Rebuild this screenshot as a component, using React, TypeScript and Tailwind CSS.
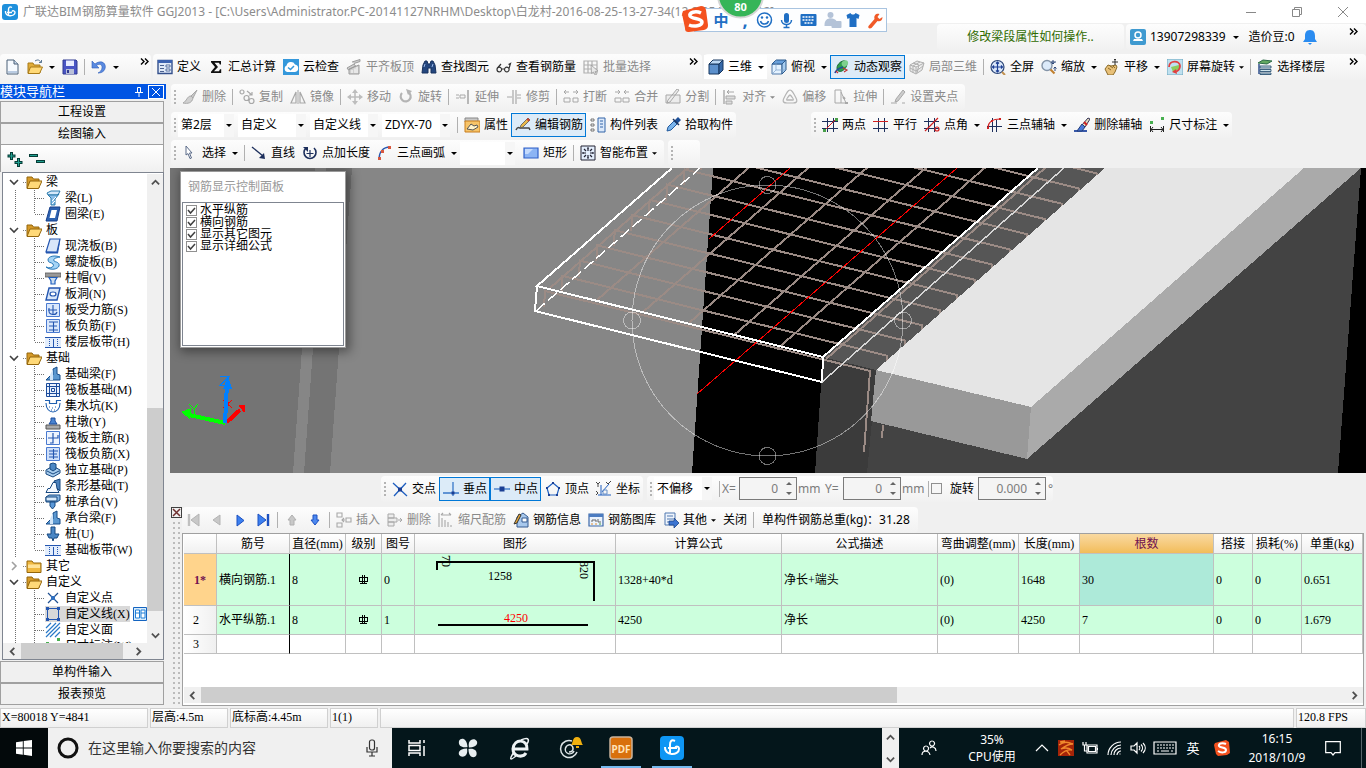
import React from "react";

type Shape = [d: string, fill: string, stroke?: string, width?: number];

const G = "#a8a8a8";
const N = "#1d2f5c";
const B = "#1f5fc0";
const R = "#d02020";

const ICONS: Record<string, Shape[]> = {
  fresh: [["M3 1h7l4 4v10H3z", "#f6faff", "#4a6078"], ["M10 1v4h4", "#c8d8ea", "#4a6078"], ["M4 12h9v2H4z", "#b9cbe2"]],
  open: [["M1 4h5l1 2h6v8H1z", "#e0ac38", "#a87a18"], ["M3.500 8h12l-3 6.500H1z", "#ffd977", "#a87a18"], ["M8 2c3-2 5-1 6 2m-2-.5h2.500V1", "none", "#5b7894"]],
  save: [["M1 1h13l1 1v13H1z", "#4a55c4", "#303a90"], ["M4 1.500h8V7H4z", "#e8ecff"], ["M4 10h8v5H4z", "#b9c0d8"], ["M5 11h2v3H5z", "#303a90"]],
  undo: [["M1 2v7h7L5.500 6.500C9 4 11.500 6 11 9c-.3 2.500-2 4-4 5 4 0 7-2 7.300-6C14.500 3 9 1 4 5z", "#5a8ae0", "#2b5cb8", 0.6]],
  define: [["M1 1.500h14v13H1z", "#dfe9f8", "#34508c", 1.4], ["M1 1h14v3H1z", "#3c62b0"], ["M3 6.500h4m-4 3h4m-4 3h4", "none", "#4b6290"], ["M9 6h4v2H9zM9 10h4v2H9z", "#fff", "#34508c", 0.8]],
  sigma: [["M3 2h10v3.500h-1.200L11 3.800H6.500L10 8l-4 4.300h5l1-2h1.200V14H3v-1.300L7 8 3 3.200z", "#111"]],
  cloud: [["M0 0h16v16H0z", "#3498db"], ["M4 13a3.500 3.500 0 0 1-.4-6.500A4.500 4.500 0 0 1 12 5.500 3.800 3.800 0 0 1 12 13z", "#fff"], ["M5 8.500l2.500 2L11 7", "none", "#3498db", 1.5]],
  flat: [["M1 9l7-4 1.500 2-7 4zM6 3l8-2.500v2L8 4.500M3 14V10l10-4v9H3z", "#d0d0d0", "#9c9c9c"], ["M6 14V11m3 3V9.500m2 4.500V8", "none", "#fff"]],
  binoc: [["M2 6l2-4h2l1 3h2l1-3h2l2 4 1 8h-5V9H7v5H1z", "#24467e", "#17305c"], ["M3 8l1-3M11 8l1-3", "none", "#9ab8e8"]],
  glasses: [["M1 10.500a2.300 2.300 0 1 0 4.600 0 2.300 2.300 0 1 0-4.600 0M8.500 10.500a2.300 2.300 0 1 0 4.600 0 2.300 2.300 0 1 0-4.600 0M5.500 10h3M1.500 9L5 5M13 9.500l1.500-5-2 1", "none", "#333", 1.2]],
  batch: [["M1 2h13v12H1zM1 6h13M1 10h13M5 2v12M9 2v12", "none", "#b0b0b0", 1.2], ["M8 6l7 6-3 .5 1.500 3-1.500.5-1.500-3-2 1.500z", "#e8e8e8", "#9c9c9c", 0.8]],
  cube: [["M1 5h10v10H1z", "#5c90cc", "#17375e"], ["M1 5l4-4h10l-4 4z", "#bcd8f4", "#17375e"], ["M11 5l4-4v10l-4 4z", "#3668a8", "#17375e"]],
  top: [["M1 5h10v10H1z", "#e4f2ff", "#5078a8"], ["M1 5l4-4h10l-4 4z", "#68a0dc", "#2d5a8c"], ["M11 5l4-4v10l-4 4z", "#a8cdf0", "#2d5a8c"], ["M5 1v10h10M5 11l-4 4", "none", "#7ba0c8", 0.7]],
  orbit: [["M3 9c0-4 5-8 8-7 4 2 1 8-3 10-3 1-5 0-5-3z", "#2f9e4c", "#1d6a38"], ["M8 3c3-3 7-2 6 2-1 2-3 3-4 3-2-1-3-3-2-5z", "#7ed08e"], ["M1 14c1-4 5-5 8-6", "none", "#234a9c", 1.6], ["M9 9l4 2-3 2M2 12l2 2", "none", "#c03030", 1.2]],
  local: [["M1 6l7-4 7 2-2 7-6 4-6-3zM1 6l6 2 8-4M7 8v7M4 4l6 2-2 8M11 3L4 7v7M1 9l6 3 7-5", "#e8e8e8", "#b0b0b0"]],
  full: [["M1 8a6.500 6.500 0 1 0 13 0A6.500 6.500 0 1 0 1 8", "#dbe8fa", "#2c4678", 1.2], ["M7.500 3v10M2.500 8h10M6 4.500L7.500 3 9 4.500M6 11.500L7.500 13 9 11.500M4 6.500L2.500 8 4 9.500M11 6.500L12.500 8 11 9.500", "none", "#1d3f94", 1.2], ["M12 13l3 3", "none", "#c09050", 2]],
  zoom: [["M1 6.500a5 5 0 1 0 10 0 5 5 0 1 0-10 0", "#dceafa", "#8494a8", 1.4], ["M9.500 10.500l4 4", "none", "#c08030", 2.2], ["M12 1v4m-1.500-1.500L12 5l1.500-1.500M14 12V8m-1.500 1.500L14 8l1.500 1.500M10 3h5", "none", "#2c4678"]],
  pan: [["M1 10l3-4 3 1 5-1 1 2-2 5-2 3H4z", "#e8c078", "#8a6a28"], ["M4 9l3 2m-1-4l3 2m0-2l2 2", "none", "#8a6a28"], ["M11 0v6M8 3h6M10 1l1-1 1 1", "none", "#333"]],
  rotscr: [["M0 0h16v16H0z", "#bfe0ef", "#6fa8c0"], ["M4 8l8-2v4l-6 3z", "#8ccc5c"], ["M2 8C2 1 13 1 13 7c0 3-2 5-5 6", "none", "#e04040", 1.8], ["M9 10l-4 3 5 2z", "#e04040"]],
  floors: [["M1 4l5-3 9 1-5 3z", "#62a860", "#2d6b48"], ["M3 7h11v2H3zM3 10.500h11v2H3zM3 14h11v1.500H3z", "#cfe4ec", "#2c5474", 0.9], ["M2 5v10", "none", "#30508c", 1.5]],
  brush: [["M15 1l-6 6 2 2z", "#c8c8c8", G], ["M9 7c-4 0-4 5-8 7 5 1 9 0 10-5z", "#d0d0d0", G]],
  copy: [["M1 3a2 2 0 1 0 4 0 2 2 0 1 0-4 0M5 9a2.500 2.500 0 1 0 5 0 2.500 2.500 0 1 0-5 0M10 12a2.500 2.500 0 1 0 5 0 2.500 2.500 0 1 0-5 0M8 2l5 4m0-3v3h-3", "none", G, 1.2]],
  mirror: [["M6 3v11H1zM10 3v11h5z", "none", G, 1.2], ["M8 1v14", "none", G]],
  move: [["M8 2v12M2 8h12", "none", "#bdbdbd", 1.6], ["M8 0l3 4H5zM8 16l3-4H5zM0 8l4-3v6zM16 8l-4-3v6z", "#bdbdbd"]],
  rotate: [["M4 4a5 5 0 1 0 6-1", "none", "#b4b4b4", 2.2], ["M8 0l6 2-4 4z", "#b4b4b4"]],
  extend: [["M1 6h3M1 9h3M5 6h5v3H5z", "none", G], ["M13 1v14", "none", G, 1.6]],
  trim: [["M7 1v14M10 1v14", "none", G, 1.2], ["M1 8h5M11 6h4M11 9h4", "none", G]],
  brk: [["M1 3h5M1 3l2-2M1 3l2 2M15 3h-5M15 3l-2-2M15 3l-2 2M1 9h6v4H1zM10 9h5v4h-5z", "none", G]],
  merge: [["M1 3h5M6 3L4 1M6 3L4 5M15 3h-5M10 3l2-2M10 3l2 2M1 9h6v4H1zM9 9h6v4H9z", "none", G]],
  split: [["M1 6h14v8H1zM14 1L5 13l-3 1 1-3L12 0z", "#ececec", G]],
  alignto: [["M2 1v14", "none", G, 1.4], ["M4 7h9v3H4zM4 12h6v3H4zM12 3H5m2-2L5 3l2 2", "#ddd", G]],
  offset: [["M8 1c2 0 3 2 6 8 2 4 0 5-3 5H5c-3 0-5-1-3-5 3-6 4-8 6-8z", "none", "#b4b4b4", 1.2], ["M8 6c1 0 4 5 3 5H5c-1 0 2-5 3-5z", "none", "#b4b4b4", 1.4]],
  stretch: [["M2 1h6v13H2zM8 3l5 11H8", "none", G], ["M10 8l2 2m0 4h3", "none", G, 2]],
  grip: [["M1 14h6m5 0h3", "none", G, 1.2], ["M13 1l-7 9-1 3 3-1 7-9z", "#ccc", G]],
  props: [["M1 1h13v4H1z", "#c8c8c8", "#888"], ["M1 4h15v11H1z", "#f7c469", "#c77c1c"], ["M3 12l4-5 3 2 3-1 1 2-5 3z", "#fff3cc", "#555"]],
  editbar: [["M1 13c2-4 2-2 5-2h8l1 2", "none", "#444", 1.5], ["M13 1L6 8l-1 3 3-1 7-7z", "#e8b84a", "#555", 0.8], ["M13 1l2 2-1.500 1.500-2-2z", "#d04030"]],
  list: [["M1 2h3v2H1zM1 7h3v2H1zM1 12h3v2H1z", "#fff", "#555", 0.8], ["M8 1h7v14H8z", "#dce9fa", "#3264a8"], ["M10 4h3m-3 3h3m-3 3h3", "none", "#3264a8"]],
  picker: [["M9 4l4-4 3 3-4 4z", "#1c4f98"], ["M2 14l1-4 6-6 3 3-6 6z", "#7ab4ec", "#235a9c"], ["M8 2l6 6", "none", "#1c3460", 1.5]],
  twopts: [["M5.500 1v14M11.500 1v14M0 4.500h16M0 11.500h16", "none", N], ["M2 14L14 2", "none", R, 1], ["M1 12h3v3H1zM13 1h3v3h-3z", "#48a048"]],
  parallel: [["M5.500 1v14M11.500 1v14", "none", N], ["M0 4.500h15", "none", R], ["M0 11.500h15", "none", N]],
  ptangle: [["M4.500 1v14M10.500 1v14M0 4.500h15M0 11.500h15", "none", N], ["M1 14L14 1M11 12a2 2 0 1 0 4 0 2 2 0 1 0-4 0", "none", R, 1.2]],
  threeax: [["M5.500 1v14M9.500 3v12M0 9.500h15", "none", N], ["M1 11C1 5 6 2 13 2", "none", R, 1.2], ["M12 1h2v2h-2zM0 10h2v2H0zM4 3h2v2H4z", R]],
  delax: [["M0 14h13", "none", "#3858a8", 2], ["M14 1L8 8l3 2 5-8z", "#e7dcc0", "#335"], ["M8 7l3 3-3 4H3z", "#4878d8", "#233c78"], ["M10 5l3 3", "none", R, 2]],
  dim: [["M1.500 9v6M14.500 9v6M1 12.500h13M4 10l-2 2.500L4 15M12 10l2 2.500-2 2.500", "none", "#222"], ["M1 4h3v3H1zM12 0h3v3h-3z", "#48b050"]],
  cursor: [["M4 1l6 7H7.500l2 5-1.500.6-2-5L4 10z", "#fff", "#5a6a88", 1]],
  line: [["M1 2l11 9", "none", N, 1.3], ["M14 14l-6-1 5-5z", N]],
  addlen: [["M4 3a6 6 0 1 0 8 0", "none", N, 1.6], ["M1 2h5v5z", N], ["M8 5v7M4.500 8.500h7", "none", N, 1.2]],
  arc: [["M2 14C2 7 6 2 13 2", "none", "#2858b0", 1.3], ["M1 12h3v3H1zM4 5h3v3H4zM11 1h3v3h-3z", "#d85840"]],
  rect: [["M1 3h14v10H1z", "#8cb4f4", "#3060c8", 1.2], ["M2 4h8l-5 5H2z", "#c4dafc"]],
  smart: [["M1 1h14v14H1z", "#e4eefc", "#223"], ["M8 3v3M8 10v3M3 8h3M10 8h3M7 3h2M7 13h2M3 7v2M13 7v2M4 4l2 2M12 4l-2 2M4 12l2-2M12 12l-2-2", "none", "#223", 1.2]],
  cross: [["M1 2l14 13M14 2L2 15", "none", B, 1.3], ["M6 6.500h4v4H6z", "#1b3f94"]],
  perp: [["M10 1v14M0 12h16", "none", "#3878c8", 1.3], ["M8.500 10.500h3v3h-3z", "#1b3f94"]],
  mid: [["M0 8h16", "none", "#3878c8", 1.3], ["M5.500 5.500h5v5h-5z", "#1b3f94"]],
  vertex: [["M8 2l6 5-2 7H4L2 7z", "none", B, 1.2], ["M7 1h2v2H7zM13 6h2v2h-2zM1 6h2v2H1zM3 13h2v2H3zM11 13h2v2h-2z", "#1b3f94"]],
  coord: [["M5 4v10M2 14h13M6 11l7-8", "none", B], ["M0 1l2 2 2-2M2 3v3M10 1l2 2 3-3M0 10l2 2m-2 2l2-2", "none", "#444"], ["M7 9h4v4H7z", "none", "#6890c8"]],
  first: [["M3 2v12", "none", "#c0c0c0", 2.4], ["M13 2v12L5 8z", "#c8c8c8", "#b4b4b4"]],
  prev: [["M11 3v10L4 8z", "#c8c8c8", "#b4b4b4"]],
  next: [["M5 3v11l7-5.500z", "#3c80f0", "#1c50c0"]],
  last: [["M3 2v12l8-6z", "#3c80f0", "#1c50c0"], ["M13 2v12", "none", "#1c50c0", 2.4]],
  up: [["M8 3l4 5h-2v5H6V8H4z", "#c8c8c8", "#b0b0b0"]],
  down: [["M8 13l4-5h-2V3H6v5H4z", "#4c88f0", "#1c50c0"]],
  insert: [["M1 1h5v4H1zM1 11h5v4H1zM10 6h5v4h-5zM9 8H6m2-2L6 8l2 2", "none", G, 1.1]],
  rem: [["M1 2h6v4H1zM1 6h9v4H1zM1 10h6v4H1zM11 8h4m-2-2l2 2-2 2", "#ececec", G]],
  scale: [["M3 3h10M3 3l2-2M13 3l-2-2M1 1v14M4 6v9M7 8v7M10 10v5M13 13v2", "none", G, 1.1]],
  info: [["M4 5l6-4 5 4v10H4z", "#a8c8ec", "#345a90"], ["M9 6h5v4H9z", "#fff", "#345a90"], ["M6 2L1 12l3-1 4-8z", "#e8a838", "#333"]],
  lib: [["M1 2h14v12H1z", "#eaf2fc", "#3c68a8", 1.2], ["M1 2h14v3H1z", "#4c7cc0"], ["M4 10V8h4v2M10 7v3h3", "none", "#666"], ["M3 12h2M7 12h2", "none", "#e09030"], ["M11 12h2", "none", "#40a040"]],
  other: [["M2 1h10v12H2z", "#eef4fc", "#5078b0"], ["M4 4h6M4 7h6M4 10h3", "none", "#5078b0"], ["M6 9h5V6l5 5-5 5v-3H6z", "#3c74d0", "#1c4488", 0.8]],
  folderOpen: [["M1 3h5l1.500 2H13v9H1z", "#d69a28", "#94660c"], ["M4 7h12l-3.500 7.500H1z", "#ffd978", "#94660c"]],
  folder: [["M1 3h5l1.500 2H15v9.500H1z", "#f0b840", "#94660c"], ["M2 6.500h12V10H2z", "#ffe298"]],
  beam: [["M2 3l4-2h9l-2 4H3z", "#d4e8fa", "#2a7aac"], ["M3 5l3 3v7h4V9l4-5-2 1z", "#8cc0ea", "#2a7aac"], ["M7 14l3-3M7 11l4-4", "none", "#fff"]],
  ring: [["M5 1h10l-3 14H1z", "#2d62b0", "#17408c"], ["M6.500 4h5.500l-2 8H4.500z", "#fff"]],
  slab: [["M5 1h10l-3 13H1z", "#d8e6fa", "#2456b0", 1.2], ["M1 13.500l11 .5 3-12v2L13 15.500H1z", "#2456b0"]],
  spiral: [["M1 13c4 2 9 0 7-3-2-2-5-1-5-4 0-4 7-5 12-3-4 1-7 1-6 4 1 1 6 1 5 5-1 3-8 5-13 1z", "#a4d4f6", "#2878b8", 1]],
  cap: [["M0 3h16v4H0z", "#999", "#555", 0.8], ["M4 7.500h8L10 11v3H6v-3z", "#cde", "#2060c0", 1.2]],
  hole: [["M4 2h11l-3 12H1z", "#d8e6fa", "#2456b0", 1.4], ["M5 8a3 2 0 1 0 6 0 3 2 0 1 0-6 0", "#fff", "#2456b0", 1.2]],
  force: [["M1.500 1.500h13v13h-13z", "#dae8fc", "#4a7ad0"], ["M3 8h9M8 3v9M4 6v3c0 4 7 5 8 1", "none", "#2456b0", 1.1]],
  neg: [["M1.500 1.500h13v13h-13z", "#dae8fc", "#4a7ad0"], ["M4 4h9M4 12h9M4 8h8M8.500 4v10", "none", "#2456b0", 1.1]],
  strip: [["M0 3h16v11H0z", "#e4eefc"], ["M0 3.500h16M0 13.500h16M8.500 5v8", "none", "#2456b0"], ["M4.500 5v1m0 1v1m0 1v1m0 1v1M12.500 5v1m0 1v1m0 1v1m0 1v1", "none", "#2456b0"]],
  fbeam: [["M1 14h14V9l-3-1V1L8 3v6l-3 1-4 4z", "#5c98d0", "#144a88"], ["M5 9l3-6v11H5z", "#cfe4f8"]],
  raft: [["M1.500 1.500h13v13h-13zM4.500 4.500h7v7h-7zM1 4.500h14M1 11.500h14M4.500 1v14M11.500 1v14M6.500 6.500h3v3h-3z", "#eaf2fe", "#1c4c9c"]],
  pit: [["M0 2.500h4.500v3h7v-3H16", "none", "#2060b0", 1.2], ["M1 5c0 12 14 12 14 0", "none", "#2060b0", 1.1], ["M4 9h1m2 1h1m2-1h1m-5 3h1m2 0h1", "none", "#2060b0", 1.1]],
  pier: [["M1 11h14v4H1z", "#aaa", "#555"], ["M4 10l2-3V4h4v3l2 3z", "#4a84d0", "#1c4c9c"]],
  mainr: [["M1.500 1.500h13v13h-13z", "#eef4fe", "#4a7ad0"], ["M8 3v10H5M3 8h10V5", "none", "#2456b0", 1.2]],
  negr: [["M1.500 1.500h13v13h-13z", "#cfe0fa", "#4a7ad0"], ["M4 5h9M4 11h9M8.500 3v10M4 8h8", "none", "#2456b0", 1.1]],
  iso: [["M1 8l7-4 7 4v3l-7 4-7-3z", "#a8cdee", "#174880"], ["M5 7V2l3-1 3 1v5l-3 2z", "#4a86c4", "#174880"], ["M2 9l6 3 6-3", "none", "#174880"]],
  stripf: [["M9 3l6-2v12l-4-4z", "#4a80bc", "#174880"], ["M1 14.500l2-4h2l3-6h3l1 6 2 4z", "#f4f9ff", "#174880"]],
  pcap: [["M1 3l3-2h11v5l-3 2H1z", "#88b8e6", "#174880"], ["M1 3h11v4H1z", "#d8eafa", "#174880"], ["M5 8h5v4l-2.500 3L5 12z", "#5a98d8", "#174880"]],
  pile: [["M6 1h4v7h4l-2 4H9l-1 3-1-3H4L2 8h4z", "#4a86c4", "#174880"]],
  point: [["M3 3l10 10M13 3L3 13", "none", "#205090", 1.2], ["M6 6h4v4H6z", "#3070c0"]],
  poly: [["M2.500 2.500h11v11h-11z", "none", "#2456b0"], ["M1 1h3v3H1zM12 1h3v3h-3zM1 12h3v3H1zM12 12h3v3h-3z", "#2456b0"]],
  face: [["M1 6l5-5M1 11L11 1M1 15L15 1M5 15L15 5M10 15l5-5", "none", "#2878c8", 1.2]],
  plus2: [["M4.500 1v8M.5 5h8M11.500 7v9M7.500 11.500h8", "none", "#063c36", 3], ["M4.500 2v6M1.500 5h6M11.500 8v7M8.500 11.500h6", "none", "#20a090", 1]],
  minus2: [["M0 4.500h9M7 10.500h9", "none", "#063c36", 3], ["M1 4.500h7M8 10.500h7", "none", "#20a090", 1]],
};

function Icon({ name, className = "h-4 w-4" }: { name: string; className?: string }) {
  return (
    <svg viewBox="0 0 16 16" className={`shrink-0 ${className}`} aria-hidden="true">
      {ICONS[name].map(([d, fill, stroke, width], i) => (
        <path key={i} d={d} fill={fill} stroke={stroke ?? "none"} strokeWidth={width ?? 1} />
      ))}
    </svg>
  );
}

function Triangle({ className = "h-[3px] w-[6px]" }: { className?: string }) {
  return (
    <svg viewBox="0 0 6 3" className={`shrink-0 ${className}`} fill="currentColor" aria-hidden="true">
      <path d="M0 0h6L3 3z" />
    </svg>
  );
}

type ToolProps = { icon?: string; label: string; off?: boolean; on?: boolean; split?: boolean; menu?: boolean; white?: boolean };

function Tool({ icon, label, off, on, split, menu, white }: ToolProps) {
  return (
    <div className={`flex h-6 shrink-0 items-stretch ${white ? "bg-white" : ""}`}>
      <button
        type="button"
        disabled={off}
        className={`flex items-center gap-1 whitespace-nowrap pl-1 pr-[3px] ${off ? "text-[#8a8a8a]" : "text-black"} ${on ? "bg-[#dcebf8] outline outline-1 -outline-offset-1 outline-[#0078d7]" : ""}`}
      >
        {icon && <Icon name={icon} />}
        {label}
        {menu && <Triangle className="h-[3px] w-[5px]" />}
      </button>
      {split && (
        <button type="button" aria-label={`${label} 选项`} className="grid w-3 place-items-center">
          <Triangle />
        </button>
      )}
    </div>
  );
}

function IconTool({ icon, label, off, split }: { icon: string; label: string; off?: boolean; split?: boolean }) {
  return (
    <div className="flex h-6 shrink-0">
      <button type="button" aria-label={label} disabled={off} className="grid w-[23px] place-items-center">
        <Icon name={icon} />
      </button>
      {split && (
        <button type="button" aria-label={`${label} 选项`} className="grid w-3 place-items-center">
          <Triangle />
        </button>
      )}
    </div>
  );
}

const Sep = () => <div className="flex w-[6px] shrink-0 justify-center"><div className="h-4 w-px bg-[#b0b0b0]" /></div>;

const Grip = () => (
  <div className="flex w-[7px] shrink-0 flex-col items-center gap-[2px]">
    {[0, 1, 2, 3].map((i) => <i key={i} className="h-[2px] w-[2px] bg-[#b4b4b4]" />)}
  </div>
);

function Strip({ className = "", children }: { className?: string; children?: React.ReactNode }) {
  return (
    <div className={`flex h-[26px] items-center rounded-sm bg-gradient-to-b from-[#fdfdfd] to-[#f1f1f1] ${className}`}>{children}</div>
  );
}

function Combo({ value, label, className }: { value: string; label: string; className: string }) {
  return (
    <div className={`relative mr-1 flex h-[23px] shrink-0 items-center bg-white ${className}`}>
      <select aria-label={label} className="h-full w-full appearance-none bg-transparent pl-[3px]">
        <option>{value}</option>
      </select>
      <div className="pointer-events-none absolute inset-y-0 right-0 grid w-[10px] place-items-center bg-[#f6f6f6]">
        <Triangle />
      </div>
    </div>
  );
}

const More = ({ className = "" }: { className?: string }) => (
  <button type="button" aria-label="更多" className={`self-start pr-2 ${className}`}>
    <svg viewBox="0 0 9 7" className="mt-1 h-[7px] w-[9px]" fill="none" stroke="#000" strokeWidth="1.4"><path d="M1 .5l3 3-3 3M5 .5l3 3-3 3" /></svg>
  </button>
);

function TitleBar() {
  return (
    <header className="relative flex h-[23px] shrink-0 items-center bg-white pl-[2px] text-[#8c8c8c]">
      <svg viewBox="0 0 16 16" className="mr-[5px] h-4 w-4 shrink-0"><rect width="16" height="16" rx="3" fill="#1e90dc" /><path d="M10 3.500c-2.500-1.500-3.500 0-3.500 2V12M3.500 7c-1 6 9.500 6 9.500 1.500 0-2-2.500-2-3-1M5 8.500h5" fill="none" stroke="#fff" strokeWidth="1.400" /></svg>
      <h1 className="whitespace-nowrap">广联达BIM钢筋算量软件 GGJ2013 - [C:\Users\Administrator.PC-20141127NRHM\Desktop\白龙村-2016-08-25-13-27-34(12.8.2541).GGJ12]</h1>
      <div className="ml-auto flex">
        {[["最小化", "M0 5.500h10"], ["还原", "M.5 2.500h7v7h-7zM2.500 2.500v-2h7v7h-2"], ["关闭", "M0 0l10 10M10 0L0 10"]].map(([label, d]) => (
          <button key={label} type="button" aria-label={label} className="grid h-5 w-[46px] place-items-center">
            <svg viewBox="0 0 10 10" className="h-[10px] w-[10px]" fill="none" stroke="#888"><path d={d} /></svg>
          </button>
        ))}
      </div>
      <div className="absolute left-[694px] top-2 flex h-6 w-[193px] items-center border border-[#a9c4e0] bg-[#fdfeff] pl-3">
        <svg viewBox="0 0 28 28" className="absolute -left-[14px] -top-1 h-7 w-7"><path d="M2 6l18-5c3 0 4 1 5 4l2 15c0 3-1 4-4 5L8 27c-3 0-4-1-4-4L1 9z" fill="#f4511e" /><path d="M20 8C14 5 8 8 9 11s12 2 12 6-8 5-13 3" fill="none" stroke="#fff" strokeWidth="3.500" /></svg>
        <span className="w-7 text-center text-[15px] font-bold leading-5 text-[#1f6fc4]">中</span>
        <span className="w-5 text-center text-lg font-bold leading-4 text-[#1f6fc4]">,</span>
        <svg viewBox="0 0 130 22" className="h-[22px] flex-1" fill="#1f6fc4">
          <g fill="none" stroke="#1f6fc4" strokeWidth="1.500"><circle cx="9" cy="11" r="7" /><path d="M5 12c1 4 7 4 8 0" /><path d="M26 11c0 6 10 6 10 0M31 15v4M28 18.500h6" /></g>
          <circle cx="6.500" cy="8.500" r="1.200" /><circle cx="11.500" cy="8.500" r="1.200" />
          <rect x="28.500" y="4" width="5" height="10" rx="2.500" />
          <rect x="45" y="5" width="16" height="12" rx="1" /><path d="M47 8h12M47 11h12M49 14h8" stroke="#fff" strokeWidth="1.400" strokeDasharray="2 1" />
          <g fill="#b4c3d8"><circle cx="75" cy="6" r="3" /><path d="M69 16c0-8 9-8 12-4v5H69z" /><rect x="76" y="12" width="10" height="7" rx="1" /></g>
          <path d="M91 6l4-2c1 2 4 2 5 0l4 2-1 4-2-1v9h-7V9l-2 1z" />
          <path d="M113 17l6-7c-1-4 2-6 5-5l-2 3 2 2 3-2c0 4-3 5-5 4l-6 7c-2 1-4 0-3-2z" fill="#f05a28" />
        </svg>
      </div>
      <div className="absolute left-[717px] top-0 h-[19px] w-[47px] text-center text-[11px] font-bold leading-[14px] text-white">
        <svg viewBox="0 0 47 19" className="absolute inset-0 h-full w-full" aria-hidden="true"><circle cx="23.500" cy="-5" r="22.500" fill="#35b558" stroke="#d6d6d6" strokeWidth="2" /></svg>
        <span className="relative">80</span>
      </div>
    </header>
  );
}

function Accounts() {
  return (
    <div className="flex h-[31px] shrink-0 justify-end gap-[2px] pt-px">
      <Strip className="w-[187px] justify-center text-[#2f6b00]"><a href="#help">修改梁段属性如何操作..</a></Strip>
      <Strip className="w-[240px] pl-1">
        <svg viewBox="0 0 16 16" className="mr-1 h-4 w-4"><rect width="16" height="16" rx="2" fill="#3f9ad0" /><circle cx="8" cy="6" r="3" fill="none" stroke="#fff" strokeWidth="1.500" /><path d="M3 12h10l-1-2H4z" fill="#fff" /></svg>
        <button type="button" className="flex items-center gap-[7px]">13907298339<Triangle /></button>
        <span className="ml-[10px]">造价豆:0</span>
        <svg viewBox="0 0 14 16" className="ml-2 h-4 w-[14px]" fill="#2b8cf0"><path d="M7 1c4 0 5 3 5 6v3l2 3H0l2-3V7c0-3 1-6 5-6zM5 14h4l-2 2z" /></svg>
        <More className="ml-auto" />
      </Strip>
    </div>
  );
}

function MainTools() {
  return (
    <div className="flex h-[30px] shrink-0 gap-[2px]">
      <Strip className="w-[151px] shrink-0">
        <IconTool icon="fresh" label="新建" /><IconTool icon="open" label="打开" split /><IconTool icon="save" label="保存" />
        <Sep /><IconTool icon="undo" label="撤销" split /><More className="ml-auto !pr-[2px]" />
      </Strip>
      <Strip className="w-[549px] shrink-0">
        <Tool icon="define" label="定义" /><Tool icon="sigma" label="汇总计算" /><Tool icon="cloud" label="云检查" />
        <Tool icon="flat" label="平齐板顶" off /><Tool icon="binoc" label="查找图元" /><Tool icon="glasses" label="查看钢筋量" />
        <Tool icon="batch" label="批量选择" off /><More className="ml-auto !pr-1" />
      </Strip>
      <Strip className="flex-1">
        <Tool icon="cube" label="三维" split white /><Tool icon="top" label="俯视" split /><Tool icon="orbit" label="动态观察" on />
        <Tool icon="local" label="局部三维" off /><Sep /><Tool icon="full" label="全屏" /><Tool icon="zoom" label="缩放" split />
        <Tool icon="pan" label="平移" split /><Tool icon="rotscr" label="屏幕旋转" menu /><Sep /><Tool icon="floors" label="选择楼层" />
        <More className="ml-auto" />
      </Strip>
    </div>
  );
}

function DrawTools() {
  return (
    <>
      <div className="flex h-7 shrink-0 pl-px">
        <Strip className="pr-1">
          <Grip /><Tool icon="brush" label="删除" off /><Sep /><Tool icon="copy" label="复制" off /><Tool icon="mirror" label="镜像" off /><Sep />
          <Tool icon="move" label="移动" off /><Tool icon="rotate" label="旋转" off /><Sep /><Tool icon="extend" label="延伸" off />
          <Tool icon="trim" label="修剪" off /><Sep /><Tool icon="brk" label="打断" off /><Tool icon="merge" label="合并" off />
          <Tool icon="split" label="分割" off /><Sep /><Tool icon="alignto" label="对齐" off menu /><Tool icon="offset" label="偏移" off />
          <Tool icon="stretch" label="拉伸" off /><Sep /><Tool icon="grip" label="设置夹点" off />
        </Strip>
      </div>
      <div className="flex h-7 shrink-0 gap-[75px] pl-px">
        <Strip>
          <Grip /><Combo label="楼层" value="第2层" className="w-14" /><Combo label="构件类型" value="自定义" className="w-[68px]" />
          <Combo label="构件种类" value="自定义线" className="w-[68px]" /><Combo label="构件" value="ZDYX-70" className="w-[68px]" />
          <Sep /><Tool icon="props" label="属性" /><Tool icon="editbar" label="编辑钢筋" on /><Tool icon="list" label="构件列表" /><Tool icon="picker" label="拾取构件" />
        </Strip>
        <Strip>
          <Grip /><Tool icon="twopts" label="两点" /><Tool icon="parallel" label="平行" /><Tool icon="ptangle" label="点角" split />
          <Tool icon="threeax" label="三点辅轴" split /><Tool icon="delax" label="删除辅轴" /><Tool icon="dim" label="尺寸标注" split />
        </Strip>
      </div>
      <div className="flex h-7 shrink-0 gap-1 pl-px">
        <Strip className="pr-1">
          <Grip /><Tool icon="cursor" label="选择" split /><Sep /><Tool icon="line" label="直线" /><Tool icon="addlen" label="点加长度" />
          <Tool icon="arc" label="三点画弧" split /><Combo label="画法" value="" className="w-[55px]" /><Tool icon="rect" label="矩形" /><Sep />
          <Tool icon="smart" label="智能布置" menu />
        </Strip>
        <Strip className="w-8"><Grip /></Strip>
      </div>
    </>
  );
}

type Row = { t: string; icon?: string; group?: "open" | "shut"; last?: boolean; sel?: boolean };
const TREE: Row[] = [
  { t: "梁", group: "open" }, { t: "梁(L)", icon: "beam" }, { t: "圈梁(E)", icon: "ring", last: true },
  { t: "板", group: "open" }, { t: "现浇板(B)", icon: "slab" }, { t: "螺旋板(B)", icon: "spiral" }, { t: "柱帽(V)", icon: "cap" },
  { t: "板洞(N)", icon: "hole" }, { t: "板受力筋(S)", icon: "force" }, { t: "板负筋(F)", icon: "neg" }, { t: "楼层板带(H)", icon: "strip", last: true },
  { t: "基础", group: "open" }, { t: "基础梁(F)", icon: "fbeam" }, { t: "筏板基础(M)", icon: "raft" }, { t: "集水坑(K)", icon: "pit" },
  { t: "柱墩(Y)", icon: "pier" }, { t: "筏板主筋(R)", icon: "mainr" }, { t: "筏板负筋(X)", icon: "negr" }, { t: "独立基础(P)", icon: "iso" },
  { t: "条形基础(T)", icon: "stripf" }, { t: "桩承台(V)", icon: "pcap" }, { t: "承台梁(F)", icon: "fbeam" }, { t: "桩(U)", icon: "pile" },
  { t: "基础板带(W)", icon: "strip", last: true }, { t: "其它", group: "shut" }, { t: "自定义", group: "open" },
  { t: "自定义点", icon: "point" }, { t: "自定义线(X)", icon: "poly", sel: true }, { t: "自定义面", icon: "face" }, { t: "尺寸标注(W)", icon: "dim" },
];

function TreeRow({ row }: { row: Row }) {
  if (row.group) {
    const open = row.group === "open";
    return (
      <li className="flex h-4 items-center">
        <svg viewBox="0 0 23 16" className="h-4 w-[23px] shrink-0" fill="none">
          <path d={open ? "M7 6l4 4 4-4" : "M9 4l4 4-4 4"} stroke={open ? "#404040" : "#a0a0a0"} strokeWidth="1.600" />
          <path d="M20 8.500h3" stroke="#808080" strokeDasharray="1 1" />
        </svg>
        <Icon name={open ? "folderOpen" : "folder"} />
        <span className="ml-1">{row.t}</span>
      </li>
    );
  }
  return (
    <li className="flex h-4 items-center">
      <svg viewBox="0 0 42 16" className="h-4 w-[42px] shrink-0" fill="none" stroke="#707070" strokeDasharray="1 1">
        <path d="M12.500 0v16" /><path d={row.last ? "M31.500 0v8" : "M31.500 0v16"} /><path d="M32 8.500h9" />
      </svg>
      <span className={`flex h-4 items-center gap-1 whitespace-nowrap ${row.sel ? "bg-[#d9d9d9]" : ""}`}>
        <Icon name={row.icon!} />{row.t}
      </span>
      {row.sel && <svg viewBox="0 0 14 14" className="ml-auto h-[14px] w-[14px]"><path d="M.5.5h13v13H.5z" fill="#d8ecfc" stroke="#1464c0" /><path d="M2.500 3h4v8h-4zM8 3h4v8H8zM2.500 6h4M8 6h4" fill="#fff" stroke="#2080d8" /></svg>}
    </li>
  );
}

function Arrow({ d, label, className }: { d: string; label: string; className: string }) {
  return (
    <button type="button" aria-label={label} className={`grid shrink-0 place-items-center ${className}`}>
      <svg viewBox="0 0 10 10" className="h-[9px] w-[9px]" fill="none" stroke="#505050" strokeWidth="2"><path d={d} /></svg>
    </button>
  );
}
const UP = "M1 7l4-4 4 4", DOWN = "M1 3l4 4 4-4", LEFT = "M7 1L3 5l4 4", RIGHT = "M3 1l4 4-4 4";

const SideButton = ({ children }: { children: React.ReactNode }) => (
  <button type="button" className="h-[22px] w-full shrink-0 border border-[#a0a0a0] bg-[#f0f0f0] leading-5">{children}</button>
);

function Sidebar() {
  return (
    <aside className="flex w-[166px] shrink-0 flex-col pr-[2px] font-[Liberation_Serif,Noto_Sans_CJK_SC,serif]">
      <div className="-mr-[2px] flex h-[15px] shrink-0 items-center bg-[#0054e3] text-[13px] text-white">
        模块导航栏
        <svg viewBox="0 0 8 10" className="ml-auto mr-[5px] h-[10px] w-2" fill="none" stroke="#fff"><path d="M2.500.5h3v5h-3zM5.500 1v5M0 5.500h8M4 6v4" /></svg>
        <button type="button" aria-label="关闭导航栏" className="mr-[2px] grid h-[14px] w-4 place-items-center border border-white">
          <svg viewBox="0 0 8 8" className="h-2 w-2" fill="none" stroke="#fff"><path d="M0 0l8 8M8 0L0 8" /></svg>
        </button>
      </div>
      <div className="h-[2px] shrink-0" />
      <SideButton>工程设置</SideButton><SideButton>绘图输入</SideButton>
      <div className="flex h-[27px] shrink-0 items-center gap-[6px] border-x border-[#a0a0a0] bg-gradient-to-b from-white to-[#f0f0f0] pl-[6px]">
        <button type="button" aria-label="全部展开"><Icon name="plus2" /></button>
        <button type="button" aria-label="全部折叠"><Icon name="minus2" /></button>
      </div>
      <div className="mb-px ml-[2px] flex min-h-0 flex-1 flex-col border border-[#7f8590] bg-white pt-px">
        <div className="flex min-h-0 flex-1">
          <ul className="min-w-0 flex-1 overflow-hidden leading-4">{TREE.map((row, i) => <TreeRow key={i} row={row} />)}</ul>
          <div className="flex w-4 flex-col bg-[#f0f0f0]">
            <Arrow d={UP} label="向上" className="h-4" />
            <div className="flex-[217]" /><div className="flex-[203] bg-[#cdcdcd]" /><div className="flex-[16]" />
            <Arrow d={DOWN} label="向下" className="h-4" />
          </div>
        </div>
        <div className="flex h-4 shrink-0 bg-[#f0f0f0] pr-4">
          <Arrow d={LEFT} label="向左" className="w-[18px]" />
          <div className="w-[102px] bg-[#cdcdcd]" />
          <Arrow d={RIGHT} label="向右" className="ml-auto w-[18px]" />
        </div>
      </div>
      <SideButton>单构件输入</SideButton><SideButton>报表预览</SideButton>
      <div className="h-[2px] shrink-0" />
    </aside>
  );
}

const CROSS = Array.from({ length: 24 }, (_, i) => ({ x: 545 + 17.45 * i, y: 291 - 15.2 * i }));
const LONG = [[550, 288], [597, 300], [643, 312], [689, 323], [733, 336], [777, 349], [826, 359]];

function Scene() {
  return (
    <svg viewBox="170 168 1196 305" preserveAspectRatio="xMinYMin slice" className="absolute inset-0 h-full w-full" shapeRendering="crispEdges" role="img" aria-label="三维视图">
      <path d="M170 168h1196v305H170z" fill="#000" />
      <path d="M170 168h182L330 473H170z" fill="#747474" />
      <path d="M352 168h361L692 473H330zM315 168h11L304 473h-11z" fill="#868686" />
      <path d="M823 357l53 13v103h-61z" fill="#3b3b3b" />
      <path d="M872 421L1105 168h256L1338 473H867z" fill="#434343" />
      <path d="M823 357l53 13L1105 168h-67z" fill="#565656" />
      <g fill="none" stroke="#9b8b85" strokeWidth="2">
        {CROSS.map(({ x, y }, i) => <path key={i} d={`M${x - 1} ${y + 16}L${x} ${y}l325 80${i === 0 ? "L864 452" : "v12"}`} />)}
        {LONG.map(([x, y], i) => <path key={i} d={`M${x} ${y}L${x + 250} ${y - 218}`} />)}
      </g>
      <path d="M876 370L1105 168h199L1031 407z" fill="#e5e5e5" />
      <path d="M876 370l155 37-4 52-156-38z" fill="#999" />
      <path d="M1031 407l273-239h57L1027 459z" fill="#aaa" />
      <path d="M883 425l-1 13" stroke="#9b8b85" strokeWidth="2" />
      <path d="M709 239l81-71M697 394l260-226" stroke="#f00" />
      <g fill="none" stroke="#fff" strokeWidth="2">
        <path d="M672 168L537 286l286 71 215-189M537 286l-2 25 287 71 1-25" />
        <path d="M536 311l164-143" strokeWidth="1.500" strokeDasharray="12 4" />
        <path d="M822 382l242-214" stroke="#d6d6d6" strokeWidth="1.500" />
      </g>
      <g fill="none" stroke="#fff" strokeOpacity=".45">
        <circle cx="767.500" cy="320.500" r="135.500" />
        <circle cx="767.500" cy="185" r="8.500" /><circle cx="767.500" cy="456" r="8.500" />
        <circle cx="632" cy="320.500" r="8.500" /><circle cx="903" cy="320.500" r="8.500" />
      </g>
      <path d="M225 423l-40-9" stroke="#0f0" strokeWidth="4" /><path d="M181 412l10-4-1 11z" fill="#0f0" />
      <path d="M189 404l5 5 4-5m-4 5v5" fill="none" stroke="#0f0" />
      <path d="M227 422l13-12" stroke="#f00" strokeWidth="4" /><path d="M245 405h-6l5 7z" fill="#f00" stroke="#f00" />
      <path d="M223 400l9 8m0-8l-9 8" stroke="#f00" />
      <path d="M225 423l2-40" stroke="#0080ff" strokeWidth="4" /><path d="M228 376l4 13h-9z" fill="#0080ff" />
      <path d="M220 376.500h9l-9 9h10" fill="none" stroke="#0080ff" />
    </svg>
  );
}

function Check({ label, checked = false }: { label: string; checked?: boolean }) {
  return (
    <label className="relative flex h-3 items-center gap-[3px] leading-3">
      <input type="checkbox" defaultChecked={checked} className="peer h-[11px] w-[11px] appearance-none border border-[#909090] bg-white" />
      <svg viewBox="0 0 11 11" className="pointer-events-none absolute left-0 hidden h-[11px] w-[11px] peer-checked:block" fill="none" stroke="#404040" strokeWidth="1.500"><path d="M2 5l2.500 3L9 3" /></svg>
      {label}
    </label>
  );
}

function Viewport() {
  return (
    <section className="relative min-h-0 flex-1 overflow-hidden">
      <Scene />
      <div className="absolute left-[10px] top-[3px] flex h-[177px] w-[166px] flex-col border border-[#9a9a9a] bg-white p-px shadow-[2px_2px_10px_2px_rgba(0,0,0,0.4)]">
        <h2 className="h-[29px] shrink-0 pl-[6px] leading-7 text-[#999]">钢筋显示控制面板</h2>
        <div className="flex-1 border border-[#7f8590] pl-[3px] pt-px font-[Liberation_Serif,Noto_Sans_CJK_SC,serif]">
          <Check label="水平纵筋" checked /><Check label="横向钢筋" checked /><Check label="显示其它图元" checked /><Check label="显示详细公式" checked />
        </div>
      </div>
    </section>
  );
}

function Spin({ value, label, className }: { value: string; label: string; className: string }) {
  return (
    <div className={`flex h-[23px] shrink-0 border border-[#7a7a7a] bg-[#f4f4f4] ${className}`}>
      <input aria-label={label} defaultValue={value} className="w-0 flex-1 bg-transparent text-right text-[#7c7c7c] outline-none" />
      <div className="flex w-[18px] flex-col items-center justify-between py-1 pl-1 text-[#666]">
        <button type="button" aria-label={`${label} 增加`}><Triangle className="h-[3px] w-[6px] rotate-180" /></button>
        <button type="button" aria-label={`${label} 减少`}><Triangle /></button>
      </div>
    </div>
  );
}

function SnapBar() {
  return (
    <div className="flex h-[31px] shrink-0 items-center gap-1 pl-[211px]">
      <Strip><Grip /><Tool icon="cross" label="交点" /><Tool icon="perp" label="垂点" on /><Tool icon="mid" label="中点" on /><Tool icon="vertex" label="顶点" /><Tool icon="coord" label="坐标" /></Strip>
      <Strip className="text-[#7c7c7c]">
        <Grip /><Combo label="偏移方式" value="不偏移" className="w-[58px] text-black" /><Sep />
        <span className="w-[17px]">X=</span><Spin label="X" value="0" className="w-[58px]" /><span className="w-[28px] pl-px">mm</span>
        <span className="w-[18px]">Y=</span><Spin label="Y" value="0" className="w-[58px]" /><span className="w-6 pl-px">mm</span><Sep />
        <label className="flex items-center gap-2 text-black"><input type="checkbox" className="h-[11px] w-[11px] appearance-none border border-[#909090] bg-[#f6f6f6]" />旋转</label>
        <div className="w-1" /><Spin label="角度" value="0.000" className="w-[68px]" /><span className="pl-[2px]">°</span>
      </Strip>
    </div>
  );
}

const COLS: [string, string][] = [
  ["", "w-[33px]"], ["筋号", "w-[73px]"], ["直径(mm)", "w-[56px]"], ["级别", "w-[36px]"], ["图号", "w-[33px]"], ["图形", "w-[201px]"], ["计算公式", "w-[166px]"],
  ["公式描述", "w-[156px]"], ["弯曲调整(mm)", "w-[81px]"], ["长度(mm)", "w-[61px]"], ["根数", "w-[134px]"], ["搭接", "w-[39px]"], ["损耗(%)", "w-[49px]"], ["单重(kg)", "w-[61px]"],
];

const Grade = () => (
  <svg viewBox="0 0 10 10" className="mx-auto h-[10px] w-[10px]" fill="none" stroke="#000" shapeRendering="crispEdges" role="img" aria-label="三级钢"><path d="M.5 2.500h8v4h-8zM3.500 0v9M5.500 0v9M1 8.500h7" /></svg>
);

const Bent = () => (
  <svg viewBox="0 0 200 51" className="block h-[51px] w-full font-[Liberation_Serif,serif] text-[12px]">
    <path d="M22 16V8h157v39" fill="none" stroke="#000" strokeWidth="2" shapeRendering="crispEdges" />
    <text x="73" y="26">1258</text>
    <text transform="translate(165 7) rotate(90)">820</text>
    <text transform="translate(27 1) rotate(90)">70</text>
  </svg>
);

const Straight = () => (
  <svg viewBox="0 0 200 28" className="block h-7 w-full font-[Liberation_Serif,serif] text-[12px]">
    <path d="M23 19h150" stroke="#000" strokeWidth="2" shapeRendering="crispEdges" />
    <text x="89" y="16" fill="#f00">4250</text>
  </svg>
);

const DATA: React.ReactNode[][] = [
  ["1*", "横向钢筋.1", "8", <Grade />, "0", <Bent />, "1328+40*d", "净长+端头", "(0)", "1648", "30", "0", "0", "0.651"],
  ["2", "水平纵筋.1", "8", <Grade />, "1", <Straight />, "4250", "净长", "(0)", "4250", "7", "0", "0", "1.679"],
  ["3", "", "", "", "", "", "", "", "", "", "", "", "", ""],
];
const HEIGHTS = ["h-[52px] bg-[#ccffdd]", "h-[29px] bg-[#ccffdd]", "h-[19px]"];

function BarTable() {
  return (
    <table className="w-full table-fixed border-separate border-spacing-0 whitespace-nowrap font-[Liberation_Serif,Noto_Sans_CJK_SC,serif] leading-4">
      <thead>
        <tr className="h-5">
          {COLS.map(([name, width], i) => (
            <th key={i} className={`border-b border-r border-[#c0c0c0] p-0 font-normal ${width} ${i === 10 ? "bg-gradient-to-b from-[#f9d9a0] to-[#f2bd58] text-[#701050]" : "bg-gradient-to-b from-white to-[#f0f0f0]"}`}>{name}</th>
          ))}
        </tr>
      </thead>
      <tbody>
        {DATA.map((row, r) => (
          <tr key={r} className={HEIGHTS[r]}>
            {row.map((cell, c) => (
              <td
                key={c}
                className={`border-b border-r p-0 ${c === 1 ? "border-b-[#c0c0c0] border-r-black" : "border-[#c0c0c0]"} ${c === 0 ? (r === 0 ? "bg-[#ffd48c] text-center font-bold text-[#701050]" : "bg-gradient-to-r from-white to-[#f0f0f0] pr-2 text-center") : c === 5 || c === 3 ? "" : "pl-[2px]"} ${c === 10 && r === 0 ? "bg-[#adead9]" : ""}`}
              >
                {cell}
              </td>
            ))}
          </tr>
        ))}
      </tbody>
    </table>
  );
}

function Details() {
  return (
    <section className="flex h-[203px] shrink-0 pt-[3px]">
      <div className="flex w-3 shrink-0 flex-col items-center gap-[3px]">
        <button type="button" aria-label="关闭面板" className="h-[11px] w-[11px] border border-[#404040]">
          <svg viewBox="0 0 9 9" className="h-[9px] w-[9px]" stroke="#703030" strokeWidth="1.500"><path d="M1 1l7 7M8 1L1 8" /></svg>
        </button>
        <svg className="w-[9px] flex-1" aria-hidden="true">
          <defs><pattern id="dots" width="5" height="5" patternUnits="userSpaceOnUse"><path d="M1 1h2v2H1z" fill="#bcbcbc" /></pattern></defs>
          <rect width="100%" height="100%" fill="url(#dots)" />
        </svg>
      </div>
      <div className="flex min-w-0 flex-1 flex-col pr-[2px]">
        <Strip className="shrink-0 self-start pr-2">
          <IconTool icon="first" label="首条" off /><IconTool icon="prev" label="上一条" off /><IconTool icon="next" label="下一条" /><IconTool icon="last" label="末条" />
          <Sep /><IconTool icon="up" label="上移" off /><IconTool icon="down" label="下移" /><Sep />
          <Tool icon="insert" label="插入" off /><Tool icon="rem" label="删除" off /><Tool icon="scale" label="缩尺配筋" off /><Tool icon="info" label="钢筋信息" />
          <Tool icon="lib" label="钢筋图库" /><Tool icon="other" label="其他" menu /><Tool label="关闭" /><Sep />
          <output className="whitespace-nowrap pl-[6px]">单构件钢筋总重(kg)：31.28</output>
        </Strip>
        <div className="flex flex-1 flex-col border border-[#a0a0a0] bg-white pl-px">
          <div className="flex-1 pr-px"><BarTable /></div>
          <div className="mb-[2px] flex h-4 shrink-0 bg-[#f0f0f0]">
            <Arrow d={LEFT} label="向左滚动" className="w-[17px]" />
            <div className="w-[59%] bg-[#cdcdcd]" />
            <Arrow d={RIGHT} label="向右滚动" className="ml-auto w-[17px]" />
          </div>
        </div>
        <div className="h-px shrink-0" />
      </div>
    </section>
  );
}

function Status() {
  const cell = "border border-[#d0d0d0] bg-gradient-to-b from-white to-[#f0f0f0] pl-px";
  return (
    <footer className="flex h-[21px] shrink-0 gap-[2px] whitespace-nowrap pt-px font-[Liberation_Serif,Noto_Sans_CJK_SC,serif] leading-[17px]">
      <div className={`w-[148px] ${cell}`}>X=80018 Y=4841</div><div className={`w-[78px] ${cell}`}>层高:4.5m</div>
      <div className={`w-[98px] ${cell}`}>底标高:4.45m</div><div className={`w-12 ${cell}`}>1(1)</div>
      <div className={`flex-1 ${cell}`} /><div className={`w-[70px] ${cell}`}>120.8 FPS</div>
    </footer>
  );
}

const APPS: [string, boolean, React.ReactNode][] = [
  ["任务视图", false, <g key="a" fill="none" stroke="#fff" strokeWidth="1.500"><path d="M4 4v3h11V4M4 20v-3h11v3M4 9.500h11v5H4zM19 4v3m0 3v10" /></g>],
  ["旋风", false, <g key="b" fill="#e8eef0"><path d="M11.500 11C6 12 2 10 3 5c2-4 8-3 8.500 6zM13 11.500c-1-5 1-9 6-8 4 2 3 8-6 8zM12.500 13c5-1 9 1 8 6-2 4-8 3-8-6zM11 12.500c1 5-1 9-6 8-4-2-3-8 6-8z" /></g>],
  ["浏览器", false, <g key="c" fill="none" stroke="#eef3f5"><path d="M7 13h13c1-10-13-11-14 0 0 8 10 9 13 4" strokeWidth="3" /><path d="M7 16C1 25 4 24 9 20M14 4c9-4 8 1 6 4" strokeWidth="1.500" /></g>],
  ["安全助手", false, <g key="d"><path d="M19 16a8.500 8.500 0 1 1-5-11M16 15a4.500 4.500 0 1 1-3-6c3 2 3 7-2 7" fill="none" stroke="#dde4e6" strokeWidth="1.500" /><path d="M13 9c2-1 1-8 6-8s4 7 6 8zM18 10h3v2h-3z" fill="#f0b010" /></g>],
  ["PDF", true, <g key="e"><rect x="1" y="1" width="22" height="22" rx="3" fill="#d9700c" stroke="#c9b39c" strokeWidth="1.500" /><text x="12" y="17" textAnchor="middle" fontSize="10" fontWeight="bold" fill="#ffe2b8">PDF</text></g>],
  ["广联达", true, <g key="f"><rect width="24" height="24" rx="4" fill="#0e96f4" /><path d="M15 5c-4-2-5 1-5 4v9M5 11c-1 9 14 9 14 2 0-3-3-3-4-1M8 12h9" fill="none" stroke="#fff" strokeWidth="2" /></g>],
];

function Tray({ d, label, width = "w-6", box = "0 0 16 16" }: { d: string; label: string; width?: string; box?: string }) {
  return (
    <button type="button" aria-label={label} className={`grid place-items-center ${width}`}>
      <svg viewBox={box} className={box === "0 0 16 16" ? "h-4 w-4" : "h-4 w-6"} fill="none" stroke="#fff" strokeWidth="1.200"><path d={d} /></svg>
    </button>
  );
}

function Taskbar() {
  return (
    <nav className="flex h-10 shrink-0 items-stretch bg-[#04161b] text-white">
      <button type="button" aria-label="开始" className="grid w-12 place-items-center bg-[#03090b]">
        <svg viewBox="0 0 16 16" className="h-4 w-4" fill="#fff"><path d="M0 2.200L6.800 1.300v6.200H0zM7.700 1.100L16 0v7.500H7.700zM0 8.400h6.800v6.300L0 13.800zM7.700 8.400H16V16l-8.300-1.200z" /></svg>
      </button>
      <label className="flex w-[344px] items-center bg-[#f0f0f0] pl-[9px] pr-3 text-[#333]">
        <svg viewBox="0 0 22 22" className="mr-[9px] h-[22px] w-[22px]"><circle cx="11" cy="11" r="9" fill="none" stroke="#111" strokeWidth="3" /></svg>
        <input aria-label="搜索" placeholder="在这里输入你要搜索的内容" className="w-0 flex-1 bg-transparent text-sm outline-none placeholder:text-[#333]" />
        <svg viewBox="0 0 16 18" className="h-[18px] w-4" fill="none" stroke="#333" strokeWidth="1.200"><rect x="5.500" y="1" width="5" height="10" rx="2" /><path d="M3 8v5h10V8M8 13v4M5 17h6" /></svg>
      </label>
      {APPS.map(([label, running, art]) => (
        <button key={label} type="button" aria-label={label} className="flex w-[51px] flex-col items-center justify-between pr-[2px]">
          <svg viewBox="0 0 24 24" className="mt-2 h-6 w-6 overflow-visible">{art}</svg>
          <i className={`h-[2px] w-10 ${running ? "bg-[#76b9ed]" : ""}`} />
        </button>
      ))}
      <div className="ml-auto flex w-[17px] flex-col justify-between bg-[#f0f0f0]">
        <Arrow d={UP} label="上翻" className="h-[18px]" /><Arrow d={DOWN} label="下翻" className="h-[18px]" />
      </div>
      <Tray label="人脉" width="w-[60px]" d="M5 6a2.500 2.500 0 1 0 .1 0M1 15c0-5 7-5 8 0M11 1a2.500 2.500 0 1 0 .1 0M9 8c2-2 6-1 6 3" />
      <div className="mr-[5px] w-[66px] pt-[3px] text-center leading-[17px]">35%<br />CPU使用</div>
      <Tray label="显示隐藏的图标" d="M2 11l6-6 6 6" />
      <button type="button" aria-label="游戏" className="grid w-6 place-items-center"><svg viewBox="0 0 16 16" className="h-4 w-4"><path d="M0 0h16v16H0z" fill="#a42408" /><path d="M1 5c5-4 9-3 14-1-5 0-8 2-12 5 5-2 8-1 11 1-5-1-8 1-12 5M9 11l3 4M2 2l5-1" fill="none" stroke="#f0882c" strokeWidth="1.300" /></svg></button>
      <Tray label="电源" d="M5 5h10v8H5zM6.500 6.500h7v5h-7zM15.500 8v2M1 2v3h3V2M2.500 5v6H5" />
      <Tray label="网络" d="M2 15C2 8 8 2 15 2M5 15c0-5 5-10 10-10M8 15c0-4 3-7 7-7M11 15c0-2 2-4 4-4M13.500 14h1" />
      <Tray label="音量" d="M1 6h3l3-3v10L4 10H1zM9 6c1 1 1 3 0 4M11 4.500c2 2 2 5 0 7M13 3c3 3 3 7 0 10" />
      <Tray label="触摸键盘" width="w-[30px]" box="0 0 24 16" d="M1 2h22v12H1zM4 5h2m1 0h2m1 0h2m1 0h2m1 0h2m1 0h2M4 8h2m1 0h2m1 0h2m1 0h2m1 0h2m1 0h2M4 11h2m2 0h8m2 0h2" />
      <button type="button" className="w-[26px] text-[13px]">英</button>
      <button type="button" aria-label="搜狗输入法" className="grid w-8 place-items-center"><svg viewBox="0 0 16 16" className="h-4 w-4"><path d="M1 3l11-3 3 2 1 11-3 2-9 1-2-2L0 5z" fill="#f4511e" /><path d="M12 4C8 2 4 4 5 6s7 1 7 4-5 3-8 1" fill="none" stroke="#fff" strokeWidth="2" /></svg></button>
      <time className="w-[78px] pt-px text-center leading-[19px]">16:15<br />2018/10/9</time>
      <Tray label="通知" width="w-[34px]" d="M.7 1.700h14.600v11H10L8 15l-2-2.300H.7z" />
      <div className="mr-1 w-3 border-r border-[#56656a]" />
    </nav>
  );
}

export default function App() {
  return (
    <div className="flex h-screen min-w-[1366px] flex-col overflow-hidden bg-[#f0f0f0] font-[Noto_Sans,Noto_Sans_CJK_SC,sans-serif] text-[12px] leading-4 text-black">
      <TitleBar />
      <Accounts />
      <MainTools />
      <main className="flex min-h-0 flex-1">
        <Sidebar />
        <div className="flex min-w-0 flex-1 flex-col pl-1">
          <DrawTools />
          <Viewport />
          <SnapBar />
          <Details />
        </div>
      </main>
      <Status />
      <Taskbar />
    </div>
  );
}
